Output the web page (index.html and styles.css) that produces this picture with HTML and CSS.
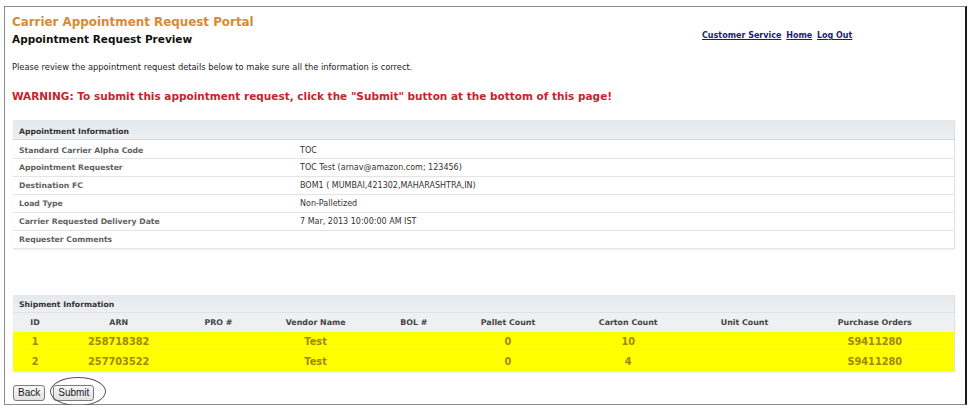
FILE: index.html
```html
<!DOCTYPE html>
<html>
<head>
<meta charset="utf-8">
<title>Appointment Request Preview</title>
<link rel="stylesheet" href="styles.css">
</head>
<body>
<div class="frame">
  <div class="top">
    <div class="titles">
      <h1 class="portal-title">Carrier Appointment Request Portal</h1>
      <h2 class="page-title">Appointment Request Preview</h2>
    </div>
    <nav class="nav">
      <a href="#">Customer Service</a>
      <a href="#">Home</a>
      <a href="#">Log Out</a>
    </nav>
  </div>

  <p class="intro">Please review the appointment request details below to make sure all the information is correct.</p>
  <p class="warning">WARNING: To submit this appointment request, click the "Submit" button at the bottom of this page!</p>

  <section class="panel appt">
    <div class="panel-head">Appointment Information</div>
    <div class="info">
      <div class="info-row"><span class="info-label">Standard Carrier Alpha Code</span><span class="info-value">TOC</span></div>
      <div class="info-row"><span class="info-label">Appointment Requester</span><span class="info-value">TOC Test (arnav@amazon.com; 123456)</span></div>
      <div class="info-row"><span class="info-label">Destination FC</span><span class="info-value">BOM1 ( MUMBAI,421302,MAHARASHTRA,IN)</span></div>
      <div class="info-row"><span class="info-label">Load Type</span><span class="info-value">Non-Palletized</span></div>
      <div class="info-row"><span class="info-label">Carrier Requested Delivery Date</span><span class="info-value">7 Mar, 2013 10:00:00 AM IST</span></div>
      <div class="info-row"><span class="info-label">Requester Comments</span><span class="info-value"></span></div>
    </div>
  </section>

  <section class="panel ship">
    <div class="panel-head">Shipment Information</div>
    <table class="ship-table">
      <colgroup>
        <col class="c-id"><col class="c-arn"><col class="c-pro"><col class="c-vendor"><col class="c-bol">
        <col class="c-pallet"><col class="c-carton"><col class="c-unit"><col class="c-po">
      </colgroup>
      <thead>
        <tr><th>ID</th><th>ARN</th><th>PRO #</th><th>Vendor Name</th><th>BOL #</th><th>Pallet Count</th><th>Carton Count</th><th>Unit Count</th><th>Purchase Orders</th></tr>
      </thead>
      <tbody>
        <tr><td>1</td><td>258718382</td><td></td><td>Test</td><td></td><td>0</td><td>10</td><td></td><td>S9411280</td></tr>
        <tr><td>2</td><td>257703522</td><td></td><td>Test</td><td></td><td>0</td><td>4</td><td></td><td>S9411280</td></tr>
      </tbody>
    </table>
  </section>

  <div class="actions">
    <button class="btn" type="button">Back</button>
    <span class="submit-wrap">
      <button class="btn" type="button">Submit</button>
      <span class="ring"></span>
    </span>
  </div>
</div>
</body>
</html>
```

FILE: styles.css
```css
html, body {
  margin: 0;
  padding: 0;
  background: #ffffff;
}

body {
  font-family: "DejaVu Sans", Verdana, sans-serif;
  color: #222;
}

.frame {
  box-sizing: border-box;
  margin: 6px 0 0 4px;
  width: 963px;
  height: 399px;
  border: 1px solid #8c8c8c;
  border-right: 2px solid #1a1a1a;
  padding: 7px 0 0 7px;
}

.top {
  display: grid;
  grid-template-columns: 690px auto;
  align-items: start;
}

.portal-title {
  margin: 0;
  font-size: 11.9px;
  line-height: 16px;
  font-weight: bold;
  color: #d68a37;
}

.page-title {
  margin: 2px 0 0 0;
  font-size: 10.5px;
  line-height: 14px;
  font-weight: bold;
  color: #111;
}

.nav {
  margin-top: 16px;
  font-size: 8px;
  line-height: 12px;
  font-weight: bold;
  white-space: nowrap;
}

.nav a {
  color: #1d1d78;
  text-decoration: underline;
  margin-right: 2px;
}

.intro {
  margin: 15px 0 0 0;
  font-size: 8.3px;
  line-height: 12px;
  color: #222;
}

.warning {
  margin: 16px 0 0 0;
  font-size: 10.5px;
  line-height: 14px;
  font-weight: bold;
  color: #c8232b;
}

.panel {
  margin-left: 1px;
  width: 942px;
  box-sizing: border-box;
  border-right: 1px solid #dde1e4;
  border-bottom: 1px solid #e2e5e8;
  box-shadow: 0 1px 2px rgba(0, 0, 0, 0.06);
}

.appt {
  margin-top: 17px;
}

.panel-head {
  background: linear-gradient(#e6e9ec, #edf0f2);
  font-size: 7.7px;
  font-weight: bold;
  color: #333;
  padding-left: 6px;
  box-sizing: border-box;
}

.appt .panel-head {
  height: 20px;
  line-height: 23px;
  border-bottom: 1px solid #d3d7db;
}

.info-row {
  display: grid;
  grid-template-columns: 287px 1fr;
  align-items: center;
  height: 18px;
  box-sizing: border-box;
  border-top: 1px solid #e2e4e6;
}

.info-row:first-child {
  border-top: none;
  padding-top: 2px;
}

.info-label {
  padding-left: 6px;
  font-size: 7.7px;
  font-weight: bold;
  color: #5f5f5f;
}

.info-value {
  font-size: 8px;
  color: #333;
}

.ship {
  margin-top: 46px;
}

.ship .panel-head {
  height: 17px;
  line-height: 20px;
}

.ship-table {
  width: 100%;
  table-layout: fixed;
  border-collapse: collapse;
}

.c-id { width: 44px; }
.c-arn { width: 123px; }
.c-pro { width: 76px; }
.c-vendor { width: 118px; }
.c-bol { width: 78px; }
.c-pallet { width: 110px; }
.c-carton { width: 130px; }
.c-unit { width: 102px; }
.c-po { width: 158px; }

.ship-table th {
  height: 19px;
  padding: 0;
  background: #eef0f2;
  border-top: 1px solid #dfe3e6;
  font-size: 7.9px;
  font-weight: bold;
  color: #444;
  text-align: center;
}

.ship-table td {
  height: 19px;
  padding: 0;
  background: #ffff00;
  font-size: 9.8px;
  font-weight: bold;
  color: #a38600;
  text-align: center;
}

.ship-table tbody tr + tr td {
  height: 19px;
  border-top: 1px solid #f4f466;
}

.actions {
  margin: 13px 0 0 1px;
  display: flex;
  gap: 8px;
  align-items: center;
}

.btn {
  box-sizing: border-box;
  height: 16px;
  padding: 0 4px;
  border: 1px solid #7b7b7b;
  border-radius: 3px;
  background: linear-gradient(#f7f7f7, #e2e2e2);
  font-family: "Liberation Sans", Arial, sans-serif;
  font-size: 10px;
  line-height: 14px;
  color: #1b1b1b;
}

.submit-wrap {
  position: relative;
  display: inline-block;
}

.submit-wrap .btn {
  display: block;
}

.ring {
  position: absolute;
  left: -3px;
  top: -8px;
  width: 54px;
  height: 27px;
  border: 1px solid #555;
  border-radius: 50%;
  pointer-events: none;
}
```
